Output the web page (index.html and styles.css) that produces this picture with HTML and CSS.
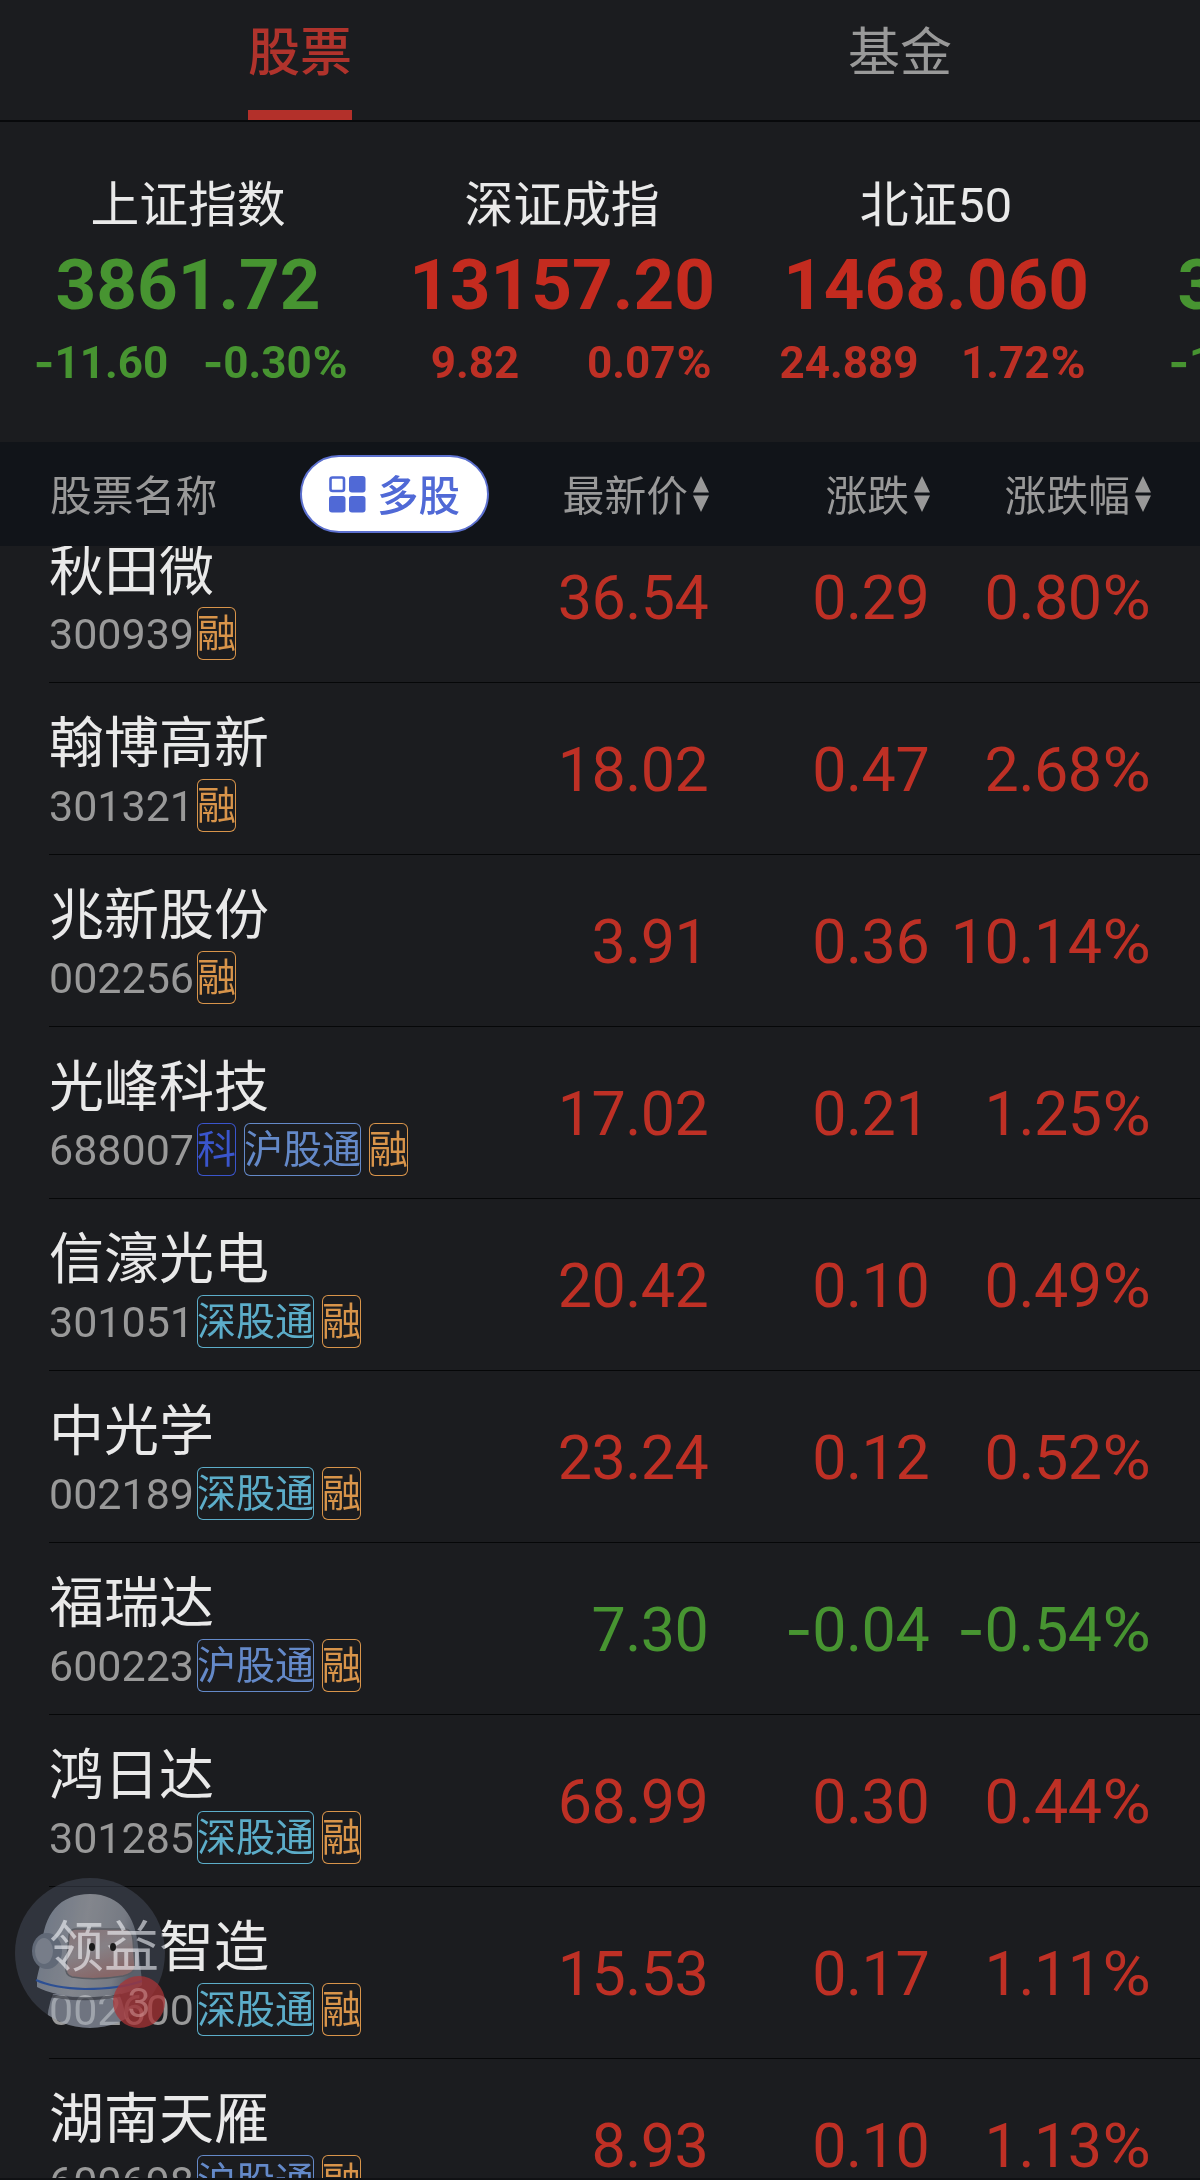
FILE: index.html
```html
<!DOCTYPE html>
<html lang="zh-CN">
<head>
    <meta charset="UTF-8">
    <meta name="viewport" content="width=device-width, initial-scale=1.0">
    <title>自选股票</title>
    <link rel="stylesheet" href="styles.css">
</head>
<body>
    <!-- Tabs -->
    <nav class="tabs">
        <div class="tab active"><span>股票</span></div>
        <div class="tab"><span>基金</span></div>
    </nav>

    <!-- Market indexes -->
    <section class="indexes">
        <div class="index down">
            <h3>上证指数</h3>
            <div class="index-value">3861.72</div>
            <div class="index-change"><span><i class="neg">-</i>11.60</span><span><i class="neg">-</i>0.30<i class="pct">%</i></span></div>
        </div>
        <div class="index up">
            <h3>深证成指</h3>
            <div class="index-value">13157.20</div>
            <div class="index-change"><span>9.82</span><span>0.07<i class="pct">%</i></span></div>
        </div>
        <div class="index up">
            <h3>北证50</h3>
            <div class="index-value">1468.060</div>
            <div class="index-change"><span>24.889</span><span>1.72<i class="pct">%</i></span></div>
        </div>
        <div class="index down">
            <h3>创业板指</h3>
            <div class="index-value">3052.59</div>
            <div class="index-change"><span><i class="neg">-</i>1.08</span><span><i class="neg">-</i>0.04<i class="pct">%</i></span></div>
        </div>
    </section>

    <!-- Table header -->
    <header class="list-head">
        <div class="head-name">股票名称</div>
        <button class="multi-btn">
            <svg width="37" height="37" viewBox="0 0 37 37">
                <rect x="1.5" y="1.5" width="13.5" height="13.5" rx="2" fill="none" stroke="#5069d6" stroke-width="2.6"/>
                <rect x="20" y="0" width="16.5" height="16.5" rx="3" fill="#5069d6"/>
                <rect x="0" y="20" width="16.5" height="16.5" rx="3" fill="#5069d6"/>
                <rect x="20" y="20" width="16.5" height="16.5" rx="3" fill="#5069d6"/>
            </svg>
            <span>多股</span>
        </button>
        <div class="head-col price"><span>最新价</span><svg class="sort" viewBox="0 0 16 36"><path d="M8 0L16 16.5H0zM0 19.5H16L8 36z"/></svg></div>
        <div class="head-col change"><span>涨跌</span><svg class="sort" viewBox="0 0 16 36"><path d="M8 0L16 16.5H0zM0 19.5H16L8 36z"/></svg></div>
        <div class="head-col percent"><span>涨跌幅</span><svg class="sort" viewBox="0 0 16 36"><path d="M8 0L16 16.5H0zM0 19.5H16L8 36z"/></svg></div>
    </header>

    <!-- Stock list -->
    <main class="list">
        <div class="row up">
            <div class="stock">
                <div class="name">秋田微</div>
                <div class="code">300939<span class="tag rong">融</span></div>
            </div>
            <div class="price">36.54</div>
            <div class="change">0.29</div>
            <div class="percent">0.80<i class="pct">%</i></div>
        </div>
        <div class="row up">
            <div class="stock">
                <div class="name">翰博高新</div>
                <div class="code">301321<span class="tag rong">融</span></div>
            </div>
            <div class="price">18.02</div>
            <div class="change">0.47</div>
            <div class="percent">2.68<i class="pct">%</i></div>
        </div>
        <div class="row up">
            <div class="stock">
                <div class="name">兆新股份</div>
                <div class="code">002256<span class="tag rong">融</span></div>
            </div>
            <div class="price">3.91</div>
            <div class="change">0.36</div>
            <div class="percent">10.14<i class="pct">%</i></div>
        </div>
        <div class="row up">
            <div class="stock">
                <div class="name">光峰科技</div>
                <div class="code">688007<span class="tag ke">科</span><span class="tag hu">沪股通</span><span class="tag rong">融</span></div>
            </div>
            <div class="price">17.02</div>
            <div class="change">0.21</div>
            <div class="percent">1.25<i class="pct">%</i></div>
        </div>
        <div class="row up">
            <div class="stock">
                <div class="name">信濠光电</div>
                <div class="code">301051<span class="tag shen">深股通</span><span class="tag rong">融</span></div>
            </div>
            <div class="price">20.42</div>
            <div class="change">0.10</div>
            <div class="percent">0.49<i class="pct">%</i></div>
        </div>
        <div class="row up">
            <div class="stock">
                <div class="name">中光学</div>
                <div class="code">002189<span class="tag shen">深股通</span><span class="tag rong">融</span></div>
            </div>
            <div class="price">23.24</div>
            <div class="change">0.12</div>
            <div class="percent">0.52<i class="pct">%</i></div>
        </div>
        <div class="row down">
            <div class="stock">
                <div class="name">福瑞达</div>
                <div class="code">600223<span class="tag hu">沪股通</span><span class="tag rong">融</span></div>
            </div>
            <div class="price">7.30</div>
            <div class="change"><i class="neg">-</i>0.04</div>
            <div class="percent"><i class="neg">-</i>0.54<i class="pct">%</i></div>
        </div>
        <div class="row up">
            <div class="stock">
                <div class="name">鸿日达</div>
                <div class="code">301285<span class="tag shen">深股通</span><span class="tag rong">融</span></div>
            </div>
            <div class="price">68.99</div>
            <div class="change">0.30</div>
            <div class="percent">0.44<i class="pct">%</i></div>
        </div>
        <div class="row up">
            <div class="stock">
                <div class="name">领益智造</div>
                <div class="code">002600<span class="tag shen">深股通</span><span class="tag rong">融</span></div>
            </div>
            <div class="price">15.53</div>
            <div class="change">0.17</div>
            <div class="percent">1.11<i class="pct">%</i></div>
        </div>
        <div class="row up">
            <div class="stock">
                <div class="name">湖南天雁</div>
                <div class="code">600698<span class="tag hu">沪股通</span><span class="tag rong">融</span></div>
            </div>
            <div class="price">8.93</div>
            <div class="change">0.10</div>
            <div class="percent">1.13<i class="pct">%</i></div>
        </div>
    </main>

    <!-- Floating assistant -->
    <div class="assistant">
        <svg class="robot" viewBox="0 0 150 156">
            <defs>
                <clipPath id="disc"><circle cx="75" cy="75" r="75"/></clipPath>
                <linearGradient id="shell" x1="0" y1="0" x2="1" y2="0.2">
                    <stop offset="0" stop-color="#4a525e"/>
                    <stop offset="0.5" stop-color="#666769"/>
                    <stop offset="0.85" stop-color="#56585c"/>
                    <stop offset="1" stop-color="#34373d"/>
                </linearGradient>
                <linearGradient id="visor" x1="0" y1="0" x2="0.4" y2="1">
                    <stop offset="0" stop-color="#6b4f4c"/>
                    <stop offset="0.5" stop-color="#6a6160"/>
                    <stop offset="1" stop-color="#6b4039"/>
                </linearGradient>
            </defs>
            <g clip-path="url(#disc)">
                <path d="M38 116Q32 130 32 150H112Q110 128 104 116z" fill="#4d5158"/>
                <path d="M22 100C24 90 27 84 27 70C28 36 45 16 75 16C106 16 121 40 123 68L127 103V107Q112 119 75 119Q40 119 22 109z" fill="url(#shell)"/>
                <ellipse cx="32" cy="73" rx="15" ry="18" fill="#3c424c"/>
                <ellipse cx="29" cy="73" rx="9" ry="13" fill="#575c64"/>
                <path d="M60 51H110Q117 51 118 62L120 88Q120 95 108 98Q80 103 57 99Q50 97 51 89L54 58Q55 51 60 51z" fill="url(#visor)" stroke="#333" stroke-width="1.5"/>
            </g>
        </svg>
        <svg class="robot-top" viewBox="0 0 150 156">
            <ellipse cx="77" cy="69" rx="3" ry="4" fill="#1a1a1a"/>
            <ellipse cx="98" cy="69" rx="3" ry="4" fill="#1a1a1a"/>
            <path d="M21 102Q38 110 70 111Q105 111 127 103" fill="none" stroke="#2c4f94" stroke-width="2"/>
            <path d="M36 118Q75 124 106 117" fill="none" stroke="#2b2d33" stroke-opacity="0.6" stroke-width="3"/>
            <circle cx="124" cy="124" r="26" fill="#a83335" fill-opacity="0.75"/>
            <text x="124" y="139" class="badge-num">3</text>
        </svg>
    </div>
</body>
</html>
```
FILE: styles.css
```css
* {
    box-sizing: border-box;
}
body {
    display: flex;
    flex-direction: column;
    height: 2180px;
    margin: 0;
    overflow: hidden;
    background-color: #1b1c1f;
    border-bottom: 2px solid #101114;
    color: #e9e9e9;
    font-family: Roboto, "Noto Sans CJK SC", sans-serif;
}
.up {
    color: #be3025;
}
.down {
    color: #479431;
}
.neg {
    font-family: Inter, sans-serif;
    font-style: normal;
    line-height: 1;
}
.pct {
    display: inline-block;
    margin-left: 0.07em;
    font-style: normal;
    transform: scaleX(1.08);
    transform-origin: right;
}

/* Tabs */
.tabs {
    display: flex;
    flex: none;
    height: 122px;
    border-bottom: 2px solid #08090b;
}
.tab {
    flex: 1;
    display: flex;
    justify-content: center;
    color: #999;
    font-size: 52px;
    line-height: 107px;
}
.tab.active {
    color: #b0332c;
    font-weight: 500;
}
.tab.active span {
    border-bottom: 10px solid #b3302a;
    height: 120px;
}

/* Indexes */
.indexes {
    display: flex;
    flex: none;
    height: 320px;
    overflow: hidden;
}
.index {
    flex: none;
    width: 374px;
    padding: 54px 12px 0 14px;
    text-align: center;
}
.index h3 {
    margin: 0;
    color: #e9e9e9;
    font-size: 48.8px;
    font-weight: 400;
    line-height: 60px;
}
.index-value {
    margin-top: 9px;
    font-size: 71px;
    font-weight: 700;
    line-height: 80px;
}
.index.up .index-value {
    color: #c42b1f;
}
.index-change {
    display: flex;
    margin-top: 13px;
    font-size: 44px;
    font-weight: 700;
    line-height: 50px;
}
.index-change span {
    flex: 1;
}

/* Table header */
.list-head {
    display: flex;
    flex: none;
    align-items: center;
    height: 104px;
    padding: 0 49px 0 50px;
    background-color: #111419;
    color: #999;
    font-size: 41.8px;
}
.head-name, .head-col span, .multi-btn span {
    padding-bottom: 3px;
}
.head-name {
    width: 250px;
}
.multi-btn {
    display: flex;
    align-items: center;
    justify-content: center;
    gap: 11px;
    width: 189px;
    height: 78px;
    padding: 0;
    border: 2px solid #5c70cf;
    border-radius: 39px;
    background-color: #fff;
    color: #5069d6;
    font-family: inherit;
    font-size: 41.5px;
    font-weight: 500;
}
.head-col {
    display: flex;
    align-items: center;
    justify-content: flex-end;
    gap: 5px;
}
.sort {
    width: 16px;
    height: 36px;
    fill: #999;
}
.price {
    width: 220px;
    text-align: right;
}
.change, .percent {
    width: 221px;
    text-align: right;
}

/* Stock list */
.list {
    flex: 1;
    overflow: hidden;
}
.row {
    display: flex;
    align-items: center;
    height: 172px;
    margin-left: 49px;
    padding: 3px 50px 0 0;
    border-bottom: 1px solid #060708;
    font-size: 61px;
    letter-spacing: -0.5px;
    white-space: nowrap;
}
.row:first-child {
    margin-top: -35px;
}
.stock {
    align-self: flex-start;
    width: 440px;
    padding-top: 27px;
    letter-spacing: 0;
}
.name {
    color: #e9e9e9;
    font-size: 55px;
    line-height: 60px;
}
.code {
    display: flex;
    margin-top: 6px;
    color: #999;
    font-size: 43px;
    line-height: 55px;
}
.tag {
    height: 53px;
    margin-left: 8px;
    border-radius: 6px;
    box-shadow: inset 0 0 0 1px;
    font-size: 39px;
}
.tag:first-child {
    margin-left: 3px;
}
.tag.rong {
    color: #d8944a;
}
.tag.ke {
    color: #3a55cc;
}
.tag.hu {
    color: #6489c8;
}
.tag.shen {
    color: #5cadc9;
}

/* Floating assistant */
.assistant {
    position: absolute;
    left: 15px;
    top: 1878px;
    width: 150px;
    height: 150px;
    border-radius: 50%;
    background-color: rgba(75, 82, 97, 0.45);
}
.robot, .robot-top {
    position: absolute;
    left: 0;
    top: 0;
    width: 150px;
    height: 156px;
}
/* the helmet only lightens what is under it */
.robot {
    mix-blend-mode: screen;
}
.badge-num {
    fill: #d9a0a0;
    fill-opacity: 0.5;
    font-size: 41px;
    text-anchor: middle;
}
```
